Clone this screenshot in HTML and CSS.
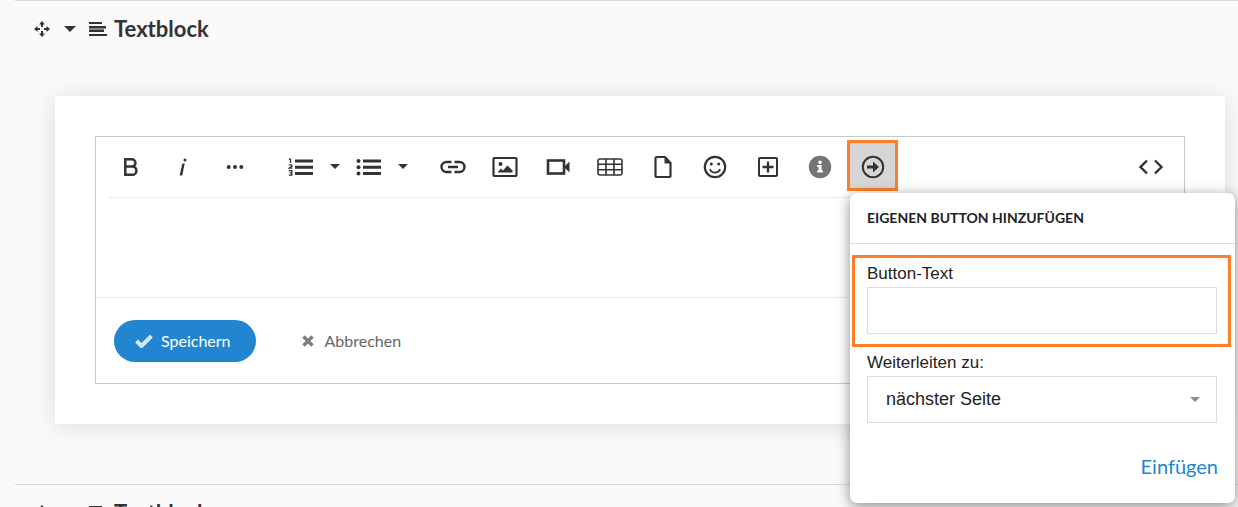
FILE: index.html
```
<!DOCTYPE html>
<html lang="de">
    <head>
        <meta charset="utf-8"/>
        <meta name="viewport" content="width=device-width, initial-scale=1.0"/>
        <title>Textblock bearbeiten</title>
        <link rel="stylesheet" href="styles.css">
    </head>
    <body>
        <svg class="sprite" aria-hidden="true">
            <symbol id="move" viewBox="0 0 16 16">
                <path d="M8 0l3 3.500H9V6H7V3.500H5zM8 16l3-3.500H9V10H7v2.500H5zM0 8l3.500-3v2H6v2H3.500v2zM16 8l-3.500-3v2H10v2h2.500v2z"/>
            </symbol>
            <symbol id="caret" viewBox="0 0 10 5">
                <path d="M0 0h10L5 5z"/>
            </symbol>
            <symbol id="lines" viewBox="0 0 18 14">
                <path d="M0 0h13v2H0zM0 4h17v2.500H0zM0 7.500h15V10H0zM0 12h18v2H0z"/>
                <path fill="#888" d="M0 6h15v2H0z"/>
            </symbol>
        </svg>

        <section class="block">
            <div class="blockHead">
                <svg class="moveIcon"><use href="#move"/></svg>
                <svg class="toggleIcon"><use href="#caret"/></svg>
                <svg class="linesIcon"><use href="#lines"/></svg>
                <h2>Textblock</h2>
            </div>

            <div class="card">
                <div class="editor">
                    <div class="toolbar">
                        <div class="group textGroup">
                            <button class="tool" aria-label="Fett">
                                <svg class="stroked" width="18" height="20" viewBox="0 0 18 20" stroke-width="2.500"><path d="M3.300 2.250h6.500a3.600 3.600 0 0 1 0 7.300H3.300zM3.300 9.550h7a4 4 0 0 1 0 8.200h-7z"/></svg>
                            </button>
                            <button class="tool" aria-label="Kursiv">
                                <svg width="10" height="20" viewBox="0 0 10 20"><path d="M4.300 6.500h2.400L4.200 18.500H1.700z"/><circle cx="7" cy="3" r="1.500"/></svg>
                            </button>
                            <button class="tool" aria-label="Mehr">
                                <svg width="18" height="6" viewBox="0 0 18 6"><circle cx="2.700" cy="3" r="2"/><circle cx="9" cy="3" r="2"/><circle cx="15.300" cy="3" r="2"/></svg>
                            </button>
                        </div>

                        <div class="group listGroup">
                            <button class="tool list" aria-label="Nummerierte Liste">
                                <svg width="26" height="20" viewBox="0 0 26 20"><path d="M7 2.500h18v3H7zM7 8.700h18v3H7zM7 15h18v3H7z"/><path class="stroked" stroke-width="1.300" d="M.8 2.200h1.700V6M.8 7.800h3v1.600L1.200 11.200H4.500M.8 13.600h3v4.600h-3M1.600 15.900h2"/></svg>
                            </button>
                            <button class="tool arrow" aria-label="Nummerierung wählen">
                                <svg width="10" height="5"><use href="#caret"/></svg>
                            </button>
                            <button class="tool list" aria-label="Aufzählung">
                                <svg width="26" height="20" viewBox="0 0 26 20"><path d="M7 2.500h18v3H7zM7 8.700h18v3H7zM7 15h18v3H7z"/><circle cx="2.500" cy="4" r="2"/><circle cx="2.500" cy="10.200" r="2"/><circle cx="2.500" cy="16.500" r="2"/></svg>
                            </button>
                            <button class="tool arrow" aria-label="Aufzählungszeichen wählen">
                                <svg width="10" height="5"><use href="#caret"/></svg>
                            </button>
                        </div>

                        <div class="group insertGroup">
                            <button class="tool" aria-label="Link">
                                <svg class="stroked" width="26" height="14" viewBox="0 0 26 14" stroke-width="2.400"><path d="M11.500 2H6.500a5 5 0 0 0 0 10h5M14.500 2h5a5 5 0 0 1 0 10h-5M8 7h10"/></svg>
                            </button>
                            <button class="tool" aria-label="Bild">
                                <svg width="26" height="20" viewBox="0 0 26 20"><rect class="stroked" x="1.500" y="1" width="23" height="18" rx="1" stroke-width="2.200"/><circle cx="8.500" cy="7" r="2"/><path d="M5.500 15.500l3.500-4 2 2 4.500-5 5 5v2z"/></svg>
                            </button>
                            <button class="tool" aria-label="Video">
                                <svg width="24" height="16" viewBox="0 0 24 16"><rect class="stroked" x="2" y="1.500" width="16" height="13" stroke-width="2.600"/><path d="M18 8l5.500-5.500v11z"/></svg>
                            </button>
                            <button class="tool" aria-label="Tabelle">
                                <svg class="stroked" width="26" height="18" viewBox="0 0 26 18" stroke-width="1.600"><rect x="1" y="1" width="24" height="16" rx="2"/><path d="M1 6.300h24M1 11.700h24M9 1v16M17 1v16"/></svg>
                            </button>
                            <button class="tool" aria-label="Datei">
                                <svg width="18" height="24" viewBox="0 0 18 24"><path class="stroked" d="M11 2H3a1.500 1.500 0 0 0-1.500 1.500v17A1.500 1.500 0 0 0 3 22h12a1.500 1.500 0 0 0 1.500-1.500V8z" stroke-width="2.200"/><path d="M10.500 1.500l6.500 7h-6.500z"/></svg>
                            </button>
                            <button class="tool" aria-label="Emoji">
                                <svg width="24" height="24" viewBox="0 0 24 24"><circle class="stroked" cx="12" cy="12" r="10.200" stroke-width="2.200"/><circle cx="8.300" cy="9" r="1.500"/><circle cx="15.700" cy="9" r="1.500"/><path class="stroked" d="M6.800 14.200a5.700 5.700 0 0 0 10.400 0" stroke-width="1.800"/></svg>
                            </button>
                            <button class="tool" aria-label="Feld hinzufügen">
                                <svg class="stroked" width="22" height="22" viewBox="0 0 22 22"><rect x="2" y="2" width="18" height="18" rx="1" stroke-width="2"/><path d="M11 5.500v11M5.500 11h11" stroke-width="2.300"/></svg>
                            </button>
                            <button class="tool" aria-label="Hinweis">
                                <svg width="24" height="24" viewBox="0 0 24 24"><circle cx="12" cy="12" r="11.200" fill="#757575"/><circle cx="12" cy="7.300" r="1.800" fill="#fff"/><path fill="#fff" d="M9.200 10h4.400v5.500h1.400v2H9.200v-2h1.400V12H9.200z"/></svg>
                            </button>
                            <div class="dropdown">
                                <button class="tool active" aria-label="Eigenen Button hinzufügen">
                                    <svg width="24" height="24" viewBox="0 0 24 24"><circle class="stroked" cx="12" cy="12" r="10.200" stroke-width="2"/><path d="M6 10.500h6V6.500l6 5.500-6 5.500v-4H6z"/></svg>
                                </button>

                                <form class="popup">
                                    <h3>Eigenen Button hinzufügen</h3>
                                    <div class="field marked">
                                        <label for="buttonText">Button-Text</label>
                                        <input id="buttonText" type="text">
                                    </div>
                                    <div class="field">
                                        <label for="target">Weiterleiten zu:</label>
                                        <div class="selectWrap">
                                            <select id="target">
                                                <option>nächster Seite</option>
                                            </select>
                                            <svg class="selectArrow"><use href="#caret"/></svg>
                                        </div>
                                    </div>
                                    <button class="insert" type="button">Einfügen</button>
                                </form>
                            </div>
                        </div>

                        <button class="tool code" aria-label="Quelltext">
                            <svg class="stroked" width="26" height="16" viewBox="0 0 26 16" stroke-width="2.400"><path d="M9 1.500L2.500 8 9 14.500M17 1.500L23.500 8 17 14.500"/></svg>
                        </button>
                    </div>

                    <div class="content" contenteditable="true"></div>

                    <div class="actions">
                        <button class="save">
                            <svg width="18" height="14" viewBox="0 0 18 14"><path d="M1.500 7l5 5L16.500 2" fill="none" stroke="#d3e7f6" stroke-width="4"/></svg>
                            Speichern
                        </button>
                        <button class="cancel">
                            <svg width="12" height="12" viewBox="0 0 12 12"><path d="M1.500 1.500l9 9M10.500 1.500l-9 9" stroke="#808080" stroke-width="3.500"/></svg>
                            Abbrechen
                        </button>
                    </div>
                </div>
            </div>
        </section>

        <section class="block">
            <div class="blockHead">
                <svg class="moveIcon"><use href="#move"/></svg>
                <svg class="toggleIcon"><use href="#caret"/></svg>
                <svg class="linesIcon"><use href="#lines"/></svg>
                <h2>Textblock</h2>
            </div>
        </section>
    </body>
</html>
```
FILE: styles.css
```
*{margin:0;padding:0;box-sizing:border-box;}

html{
    overflow: hidden;
}

body{
    background: #fafafa;
    font-family: Lato, sans-serif;
    color: #333;
}

svg{
    display: block;
    flex: none;
    fill: #333;
}

.stroked{
    fill: none;
    stroke: #333;
}

button{
    border: none;
    background: none;
    font-family: inherit;
    cursor: pointer;
}

.sprite{
    position: absolute;
    width: 0;
    height: 0;
}

.block{
    margin-left: 15px;
    padding-bottom: 60px;
    border-top: 1px solid #d9d9d9;
}

.blockHead{
    display: flex;
    align-items: center;
    height: 55px;
    padding-left: 19px;
}

.blockHead h2{
    font-size: 22px;
    line-height: 28px;
    font-weight: 700;
}

.moveIcon{
    width: 16px;
    height: 16px;
    margin-right: 14px;
}

.toggleIcon{
    width: 12px;
    height: 6px;
    margin-right: 13px;
}

.linesIcon{
    width: 18px;
    height: 14px;
    margin-right: 7px;
}

.card{
    margin: 40px 13px 0 40px;
    padding: 40px;
    background: white;
    box-shadow: 0 2px 24px #0000001F;
}

.editor{
    border: 1px solid #c8c8c8;
}

.toolbar{
    display: flex;
    align-items: center;
    height: 61px;
    margin-left: 12px;
    padding-bottom: 4px;
    border-bottom: 1px solid #ebebeb;
}

.group{
    display: flex;
    flex: none;
}

.textGroup{
    gap: 7px;
    margin-right: 22px;
}

.listGroup{
    margin-right: 15px;
}

.insertGroup{
    justify-content: space-between;
    width: 465px;
}

.tool{
    display: flex;
    justify-content: center;
    align-items: center;
    width: 45px;
    height: 45px;
    padding-top: 3px;
}

.tool.list{
    width: 43px;
}

.tool.arrow{
    width: 25px;
}

.tool.active{
    background: #d6d6d6;
    outline: 3px solid #ff7f27;
}

.tool.code{
    margin-left: auto;
    margin-right: 11px;
}

.dropdown{
    position: relative;
}

.popup{
    position: absolute;
    top: 50px;
    left: 0;
    z-index: 2;
    width: 385px;
    padding-bottom: 23px;
    border-radius: 7px;
    background: white;
    box-shadow: 0 3px 14px #00000073;
    color: #222;
}

.popup h3{
    height: 51px;
    margin-bottom: 11px;
    padding-left: 17px;
    border-bottom: 1px solid #dcdcdc;
    font-size: 14px;
    line-height: 50px;
    font-weight: 700;
    text-transform: uppercase;
}

.field{
    margin: 0 4px 0 2px;
    padding: 5px 14px 13px 15px;
    font-family: "Liberation Sans", Arial, sans-serif;
}

.field.marked{
    padding: 5px 11px 10px 12px;
    border: 3px solid #ff7f27;
}

.field label{
    display: block;
    margin-bottom: 2px;
    font-size: 17px;
    line-height: 22px;
}

.field input, .field select{
    display: block;
    width: 100%;
    height: 47px;
    padding: 0 18px;
    border: 1px solid #dcdcdc;
    background: white;
    font-family: inherit;
    font-size: 18px;
    color: #222;
    appearance: none;
}

.selectWrap{
    position: relative;
}

.selectArrow{
    position: absolute;
    top: 21px;
    right: 17px;
    width: 10px;
    height: 5px;
    fill: #8c8c8c;
}

.insert{
    display: block;
    margin: 16px 17px 0 auto;
    font-size: 20px;
    line-height: 28px;
    color: #2185d0;
}

.content{
    height: 99px;
    outline: none;
}

.actions{
    display: flex;
    align-items: center;
    gap: 46px;
    height: 86px;
    padding: 0 18px;
    border-top: 1px solid #ebebeb;
}

.actions button{
    display: flex;
    align-items: center;
    height: 42px;
    font-size: 16px;
}

.save{
    gap: 8px;
    padding: 0 25px 0 21px;
    border-radius: 21px;
    background: #2185d0;
    color: white;
}

.cancel{
    gap: 11px;
    color: #666;
}
```
